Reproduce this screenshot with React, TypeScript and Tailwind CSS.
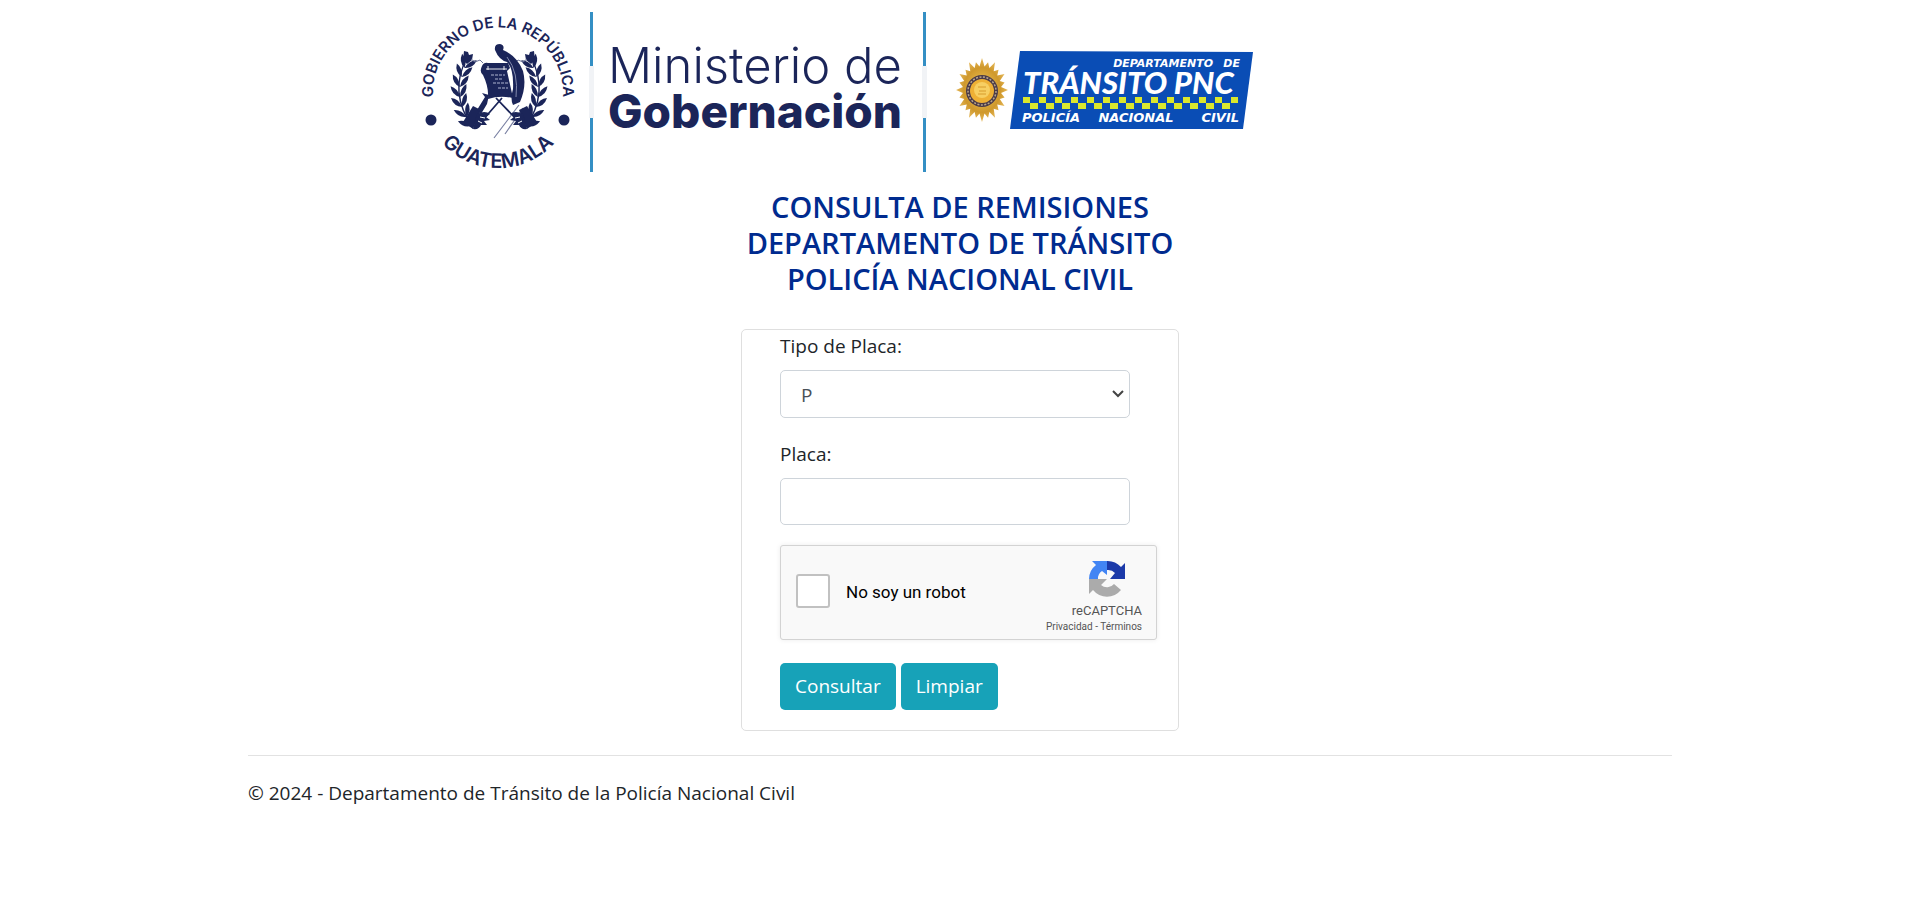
import { useState } from "react";

const NAVY = "#1b2559";

const stem = [
  { x: 471, y: 125, r: -38 },
  { x: 466, y: 116, r: -28 },
  { x: 462, y: 106, r: -18 },
  { x: 460, y: 96, r: -8 },
  { x: 460, y: 86, r: 4 },
  { x: 462, y: 76, r: 14 },
  { x: 465, y: 67, r: 24 },
];

function Wreath() {
  return (
    <g fill={NAVY}>
      <path d="M473 128Q448 92 467 58" fill="none" stroke={NAVY} strokeWidth="1.4" />
      {stem.map((l) => (
        <g key={l.y} transform={`translate(${l.x} ${l.y}) rotate(${l.r})`}>
          <path d="M0 1Q-8 -2 -8 -11Q-1 -8 0 1Z" />
          <path d="M0 1Q8 -2 8 -11Q1 -8 0 1Z" />
        </g>
      ))}
      <path d="M464 51l4 1 1 3 4-1-1 6-5 4-4-4z" />
      <path d="M471 59l4 3 5-2 3 3" fill="none" stroke="#6d7599" strokeWidth="1" />
    </g>
  );
}

function Emblem() {
  return (
    <g>
      <path id="arc-top" d="M436 112A65 65 0 1 1 560 112" fill="none" />
      <path id="arc-bottom" d="M422 92A76 76 0 0 0 574 92" fill="none" />
      <text className="font-[Inter] text-[15px] font-semibold" fill={NAVY} textAnchor="middle">
        <textPath href="#arc-top" startOffset="50%">GOBIERNO DE LA REPÚBLICA</textPath>
      </text>
      <text className="font-[Inter] text-[20px] font-semibold" fill={NAVY} textAnchor="middle">
        <textPath href="#arc-bottom" startOffset="50%">GUATEMALA</textPath>
      </text>
      <circle cx="431" cy="120" r="5.500" fill={NAVY} />
      <circle cx="564" cy="120" r="5.500" fill={NAVY} />
      <Wreath />
      <g transform="translate(998 0) scale(-1 1)">
        <Wreath />
      </g>
      <g stroke={NAVY} strokeWidth="1.800" fill="none">
        <path d="M482 121L502 98M518 121L496 98" />
        <path d="M519 105L494 138M523 108L505 134" stroke="#7a81a3" strokeWidth="1.200" />
      </g>
      <path d="M463 122l10-16 8 4-8 19zM537 122l-10-16-8 4 8 19z" fill={NAVY} />
      <path d="M477 110l8-13-3-4 7 2-2 9-6 10z" fill={NAVY} />
      <path d="M477 114q8-4 13 0l-4 3 4 3-6 1 3 4-6 0q-2 5-8 4zM523 114q-8-4-13 0l4 3-4 3 6 1-3 4 6 0q2 5 8 4z" fill={NAVY} />
      <path d="M480 117l5 1M478 121l4 2M520 117l-5 1M522 121l-4 2" stroke="#fff" strokeWidth="1" />
      <path d="M482 66q2-4 6-3h20l2 5-3 3 6 27q-13-3-25 1 1-12-5-24-4-3-1-9z" fill={NAVY} />
      <path d="M486 69h21M488 66v4M504 66v4" stroke="#fff" strokeWidth="0.900" />
      <g stroke="#aeb4cf" strokeWidth="1.100" strokeDasharray="3 1">
        <path d="M491 75h14M495 79h8M493 83h15M498 88h10" />
      </g>
      <path d="M495 50q-1-6 5-6 5 1 3 6 14 6 20 21 4 15-3 31l-7 3q-3-6 0-16 1-20-6-27-8-2-12-12z" fill={NAVY} />
      <path d="M507 57q12 16 9 40" stroke="#8d94b5" strokeWidth="0.900" fill="none" />
    </g>
  );
}

function Divider({ x }: { x: number }) {
  return (
    <g>
      <rect x={x} y="12" width="3" height="54" fill="#348fc4" />
      <rect x={x - 1} y="66" width="5" height="52" fill="#f1f3f6" />
      <rect x={x} y="118" width="3" height="54" fill="#348fc4" />
    </g>
  );
}

const rays = Array.from({ length: 48 }, (_, i) => {
  const a = (i * Math.PI) / 24;
  const k = i % 2 ? 0.74 : i % 4 === 0 ? 1 : 0.9;
  return `${982 + 26 * k * Math.sin(a)},${90 - 32 * k * Math.cos(a)}`;
}).join(" ");

function Badge() {
  return (
    <g>
      <defs>
        <radialGradient id="gold">
          <stop offset="0" stopColor="#f6cf5c" />
          <stop offset="0.700" stopColor="#cf982c" />
          <stop offset="1" stopColor="#e6b95a" />
        </radialGradient>
      </defs>
      <polygon points={rays} fill="url(#gold)" />
      <circle cx="982" cy="91" r="16" fill="#4a3a48" />
      <circle cx="982" cy="91" r="14" fill="none" stroke="#b9a68b" strokeWidth="1.500" strokeDasharray="2 1.500" />
      <circle cx="982" cy="91" r="12" fill="#eeb035" />
      <circle cx="982" cy="90" r="8" fill="#f7cf62" />
      <path d="M978 87h8M979 91h7M978 94h8" stroke="#d79c2c" strokeWidth="1" />
    </g>
  );
}

function Banner() {
  return (
    <g>
      <polygon points="1020,51 1253,52 1243,129 1010,129" fill="#0a4db5" />
      <g fill="#fff" fontStyle="italic" fontWeight="700">
        <g className="font-[DejaVu_Sans] text-[11px]">
          <text x="1213" y="67" textAnchor="end">DEPARTAMENTO</text>
          <text x="1240" y="67" textAnchor="end">DE</text>
        </g>
        <g className="font-[DejaVu_Sans] text-[13px]">
          <text x="1022" y="122">POLICÍA</text>
          <text x="1136" y="122" textAnchor="middle">NACIONAL</text>
          <text x="1239" y="122" textAnchor="end">CIVIL</text>
        </g>
        <text x="1023" y="94" className="font-[Lato] text-[31px] font-black">TRÁNSITO PNC</text>
      </g>
      {Array.from({ length: 14 }, (_, i) => (
        <g key={i} fill="#dbe72c">
          <rect x={1023 + i * 16} y="97" width="7" height="6" />
          {i < 13 && <rect x={1030 + i * 16} y="103" width="8" height="6" />}
        </g>
      ))}
    </g>
  );
}

function Header() {
  return (
    <header className="flex justify-center">
      <svg viewBox="410 0 1100 180" className="w-full max-w-[1100px]" role="img" aria-label="Ministerio de Gobernación">
        <Emblem />
        <Divider x={590} />
        <text x="608" y="83" fill={NAVY} className="font-[Inter] text-[49px] font-light">Ministerio de</text>
        <text x="608" y="128" fill={NAVY} className="font-[Inter] text-[46px] font-extrabold">Gobernación</text>
        <Divider x={923} />
        <Badge />
        <Banner />
      </svg>
    </header>
  );
}

function Recaptcha() {
  return (
    <div className="flex h-[95px] w-[377px] justify-between rounded-[3px] border border-[#d3d3d3] bg-[#f9f9f9] pr-3.5 pl-[15px] shadow-[0_0_5px_rgba(0,0,0,0.08)]">
      <label className="flex items-center gap-4 font-[Roboto] text-[17px] text-black">
        <input type="checkbox" className="mb-1 size-[34px] appearance-none rounded-[3px] border-2 border-[#c1c1c1] bg-white" />
        No soy un robot
      </label>
      <div className="flex flex-col items-end pt-3.5 font-[Roboto] text-[#555]">
        <svg viewBox="0 0 38 38" className="mr-4 size-[38px]" aria-hidden="true">
          <path d="M37 19V3l-4 4A18 18 0 0 0 19 1v9a9 9 0 0 1 8 3l-5 6z" fill="#1c3aa9" />
          <path d="M19 1H4l4 4A18 18 0 0 0 1 19h9a9 9 0 0 1 4-8l5 4z" fill="#4285f4" />
          <path d="M1 19v15l4-4A18 18 0 0 0 33 30l-7-6a9 9 0 0 1-13 1l6-6z" fill="#ababab" />
        </svg>
        <span className="mt-[3px] text-[13px] leading-5">reCAPTCHA</span>
        <span className="text-[10px] leading-3">
          <a href="#privacidad">Privacidad</a> - <a href="#terminos">Términos</a>
        </span>
      </div>
    </div>
  );
}

export default function App() {
  const [placa, setPlaca] = useState("");
  const button = "h-[47px] rounded-[5px] bg-[#17a2b8] px-[15px] text-[19px] text-white";
  return (
    <div className="mx-auto max-w-[1424px] bg-white font-['Open_Sans',sans-serif] text-[19px] text-[#212529]">
      <Header />
      <main className="flex flex-col items-center">
        <h1 className="mt-[9px] text-center text-[29px] leading-9 font-semibold text-[#002b8f]">
          CONSULTA DE REMISIONES
          <br />
          DEPARTAMENTO DE TRÁNSITO
          <br />
          POLICÍA NACIONAL CIVIL
        </h1>
        <form className="mt-8 w-[438px] rounded-[5px] border border-[#dfdfdf] pb-5 pl-[38px]" onSubmit={(e) => e.preventDefault()}>
          <label htmlFor="tipo" className="block leading-8">Tipo de Placa:</label>
          <div className="relative mt-2 w-[350px]">
            <select id="tipo" className="h-12 w-full appearance-none rounded-[5px] border border-[#ced4da] bg-white px-5 pt-0.5 text-[#495057]">
              <option>P</option>
            </select>
            <svg viewBox="0 0 12 8" className="pointer-events-none absolute top-5 right-1.5 h-2 w-3" aria-hidden="true">
              <path d="M1 1l5 5 5-5" fill="none" stroke="#444" strokeWidth="2" />
            </svg>
          </div>
          <label htmlFor="placa" className="mt-5 block leading-8">Placa:</label>
          <input
            id="placa"
            type="text"
            value={placa}
            onChange={(e) => setPlaca(e.target.value)}
            className="mt-2 mb-5 block h-[47px] w-[350px] rounded-[5px] border border-[#ced4da] px-4 text-[#495057]"
          />
          <Recaptcha />
          <div className="mt-[23px] flex gap-[5px]">
            <button type="submit" className={button}>Consultar</button>
            <button type="button" className={button} onClick={() => setPlaca("")}>Limpiar</button>
          </div>
        </form>
      </main>
      <footer className="mt-6 border-t border-[#e2e2e2] pt-[22px] leading-[30px]">
        © 2024 - Departamento de Tránsito de la Policía Nacional Civil
      </footer>
    </div>
  );
}
